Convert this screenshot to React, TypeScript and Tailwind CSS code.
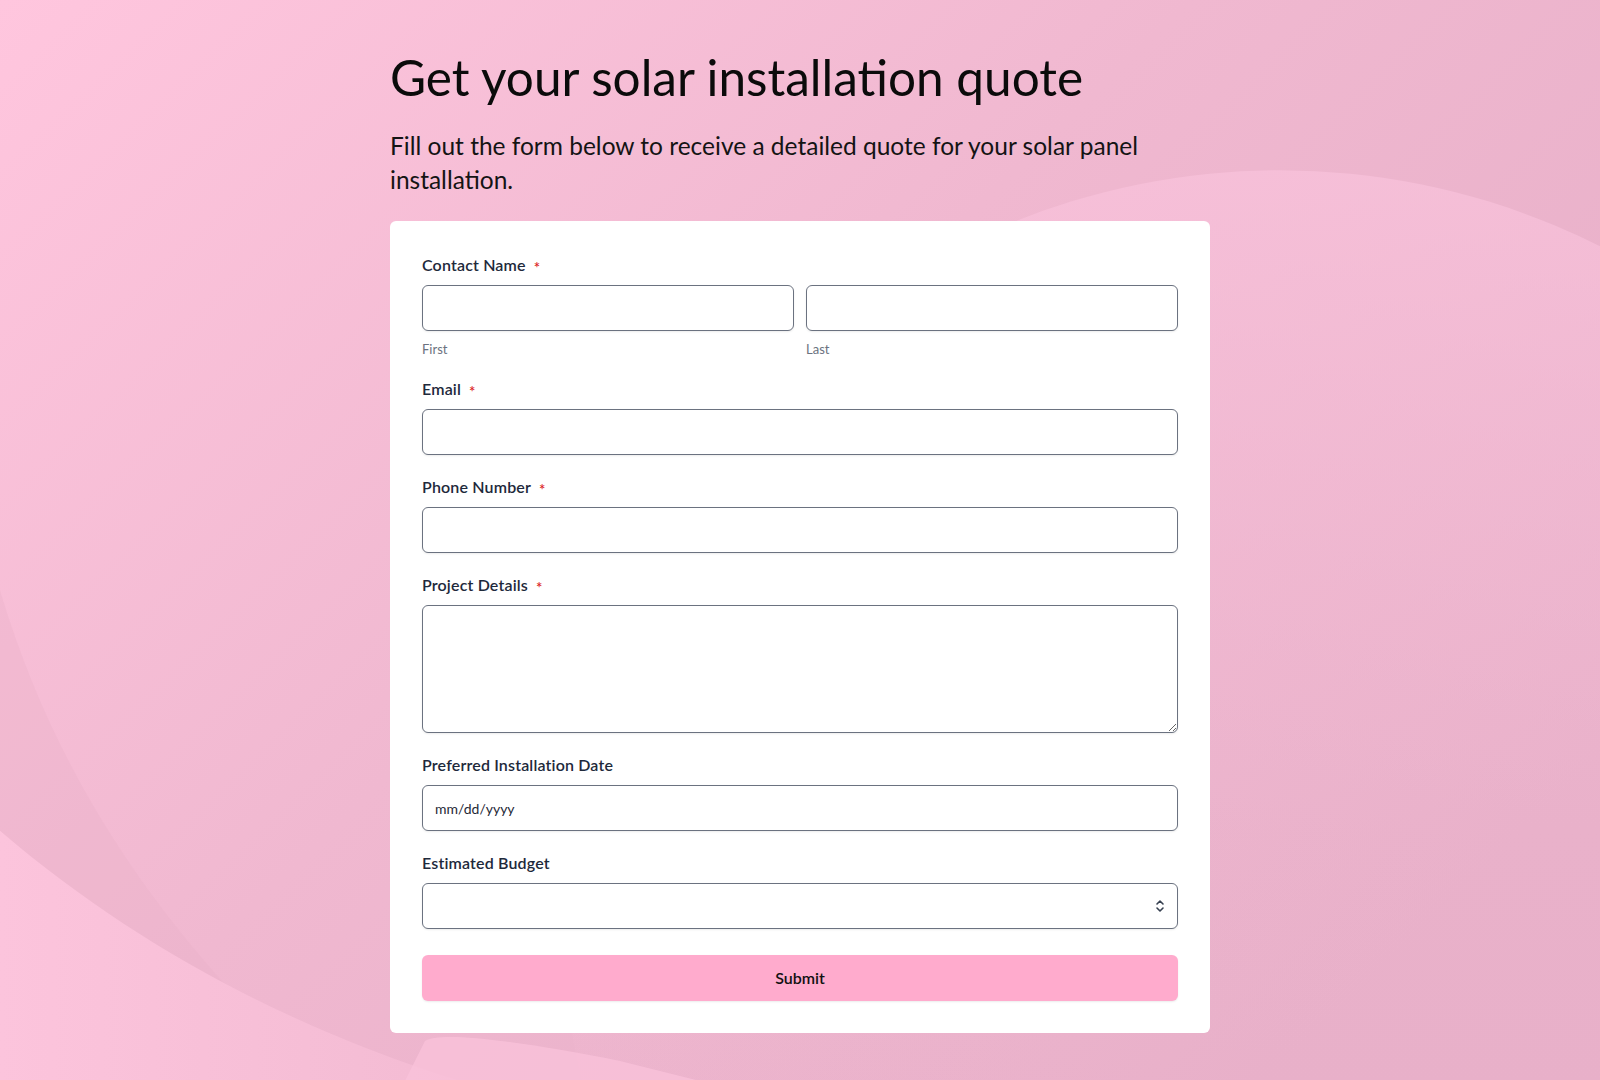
import type { ReactNode } from 'react'

const font = { fontFamily: 'Lato, "Noto Sans", sans-serif' }

function Label({ children, required }: { children: ReactNode; required?: boolean }) {
  return (
    <div className="mb-2 flex h-6 items-center text-[16px] font-semibold tracking-[0.01em] text-[#1e293b]">
      {children}
      {required && <span className="ml-2 mt-1 text-[15px] leading-none text-[#dc2626]">*</span>}
    </div>
  )
}

const inputCls =
  'block h-[46px] w-full rounded-md border border-[#6b7280] bg-white px-3 text-[14px] text-[#1f2937] shadow-[0_1px_2px_rgba(0,0,0,0.08)] outline-none'

function Background() {
  return (
    <svg
      className="pointer-events-none absolute inset-0 h-full w-full"
      viewBox="0 0 1600 1080"
      preserveAspectRatio="none"
    >
      <defs>
        <linearGradient id="bg" x1="0" y1="0" x2="1" y2="0.7">
          <stop offset="0" stopColor="#ffc6de" />
          <stop offset="0.5" stopColor="#f0b8d0" />
          <stop offset="1" stopColor="#e6aec7" />
        </linearGradient>
        <linearGradient id="arc" x1="0" y1="0" x2="0" y2="1">
          <stop offset="0" stopColor="#f9c3dc" stopOpacity="0.7" />
          <stop offset="0.45" stopColor="#f5bdd6" stopOpacity="0.2" />
          <stop offset="1" stopColor="#f5bdd6" stopOpacity="0" />
        </linearGradient>
        <linearGradient id="low" x1="0" y1="0" x2="1" y2="0">
          <stop offset="0" stopColor="#fcc4dc" />
          <stop offset="1" stopColor="#f3bbd3" />
        </linearGradient>
      </defs>
      <rect width="1600" height="1080" fill="url(#bg)" />
      <ellipse cx="1280" cy="900" rx="720" ry="730" fill="url(#arc)" />
      <path d="M0 590 C60 790 170 940 320 1080 L0 1080 Z" fill="#e8aec8" opacity="0.3" />
      <path d="M0 830 C140 950 300 1030 460 1080 L0 1080 Z" fill="url(#low)" />
      <path d="M405 1080 L425 1040 C440 1030 520 1040 620 1060 L700 1080 Z" fill="#f9c2da" opacity="0.8" />
    </svg>
  )
}

export default function App() {
  return (
    <div className="relative min-h-screen w-full overflow-hidden" style={font}>
      <Background />
      <div className="relative mx-auto w-[820px] pt-[48px] pb-12">
        <h1 className="text-[49.5px] leading-[58px] font-normal text-[#0b0b0b]">
          Get your solar installation quote
        </h1>
        <p className="mt-[23px] mb-6 pr-10 text-[24.5px] leading-[34px] text-[#141414]">
          Fill out the form below to receive a detailed quote for your solar panel installation.
        </p>

        <div className="rounded-md bg-white p-8">
          <div className="flex flex-col gap-5">
            <div>
              <Label required>Contact Name</Label>
              <div className="grid grid-cols-2 gap-3">
                <div>
                  <input className={inputCls} />
                  <div className="mt-2.5 text-[13px] leading-4 text-[#6b7280]">First</div>
                </div>
                <div>
                  <input className={inputCls} />
                  <div className="mt-2.5 text-[13px] leading-4 text-[#6b7280]">Last</div>
                </div>
              </div>
            </div>

            <div>
              <Label required>Email</Label>
              <input className={inputCls} />
            </div>

            <div>
              <Label required>Phone Number</Label>
              <input className={inputCls} />
            </div>

            <div>
              <Label required>Project Details</Label>
              <textarea className="block h-32 w-full rounded-md border border-[#6b7280] bg-white px-3 py-2 text-[14px] shadow-[0_1px_2px_rgba(0,0,0,0.08)] outline-none" />
            </div>

            <div>
              <Label>Preferred Installation Date</Label>
              <div className={inputCls + ' flex items-center text-[13px]'}>mm/dd/yyyy</div>
            </div>

            <div>
              <Label>Estimated Budget</Label>
              <div className={inputCls + ' flex items-center justify-end pr-3'}>
                <svg width="10" height="16" viewBox="0 0 10 16" fill="none" stroke="#374151" strokeWidth="1.6" strokeLinecap="round" strokeLinejoin="round">
                  <path d="M2 6 L5 3 L8 6" />
                  <path d="M2 10 L5 13 L8 10" />
                </svg>
              </div>
            </div>

            <button className="mt-1.5 h-[46px] w-full rounded-md bg-[#ffabcd] text-[16px] font-semibold text-[#111] shadow-[0_1px_2px_rgba(0,0,0,0.08)]">
              Submit
            </button>
          </div>
        </div>
      </div>
    </div>
  )
}
